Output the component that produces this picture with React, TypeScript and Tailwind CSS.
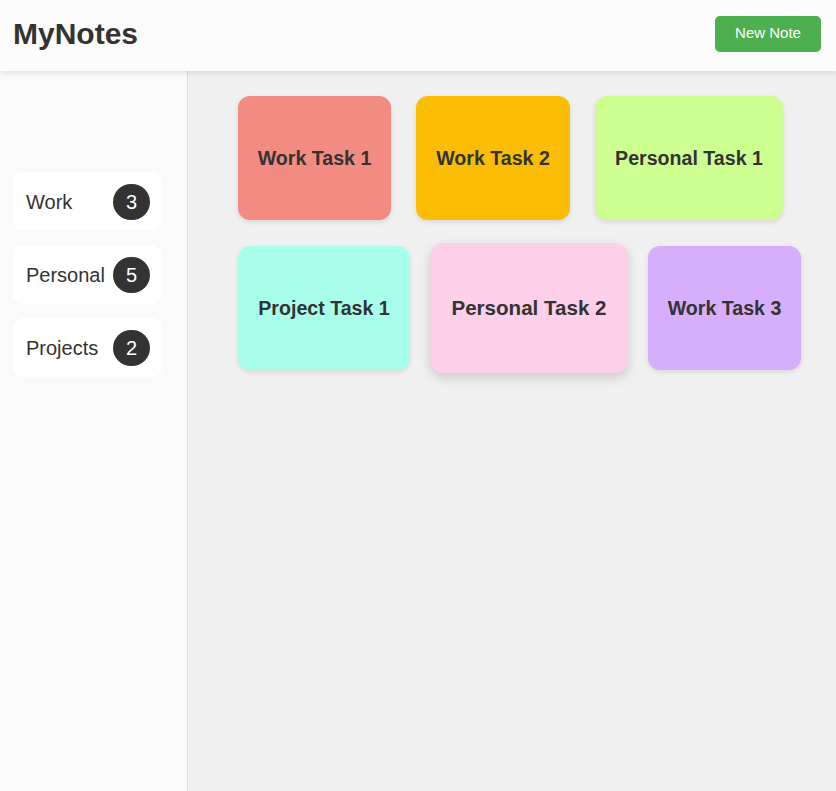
import React from "react";

const notes = [
  { title: "Work Task 1", bg: "bg-[#f28b82]", w: "w-[153px]", hover: false },
  { title: "Work Task 2", bg: "bg-[#fbbc04]", w: "w-[154px]", hover: false },
  { title: "Personal Task 1", bg: "bg-[#ccff90]", w: "w-[188px]", hover: false },
  { title: "Project Task 1", bg: "bg-[#a7ffeb]", w: "w-[172px]", hover: false },
  { title: "Personal Task 2", bg: "bg-[#fdcfe8]", w: "w-[188px]", hover: true },
  { title: "Work Task 3", bg: "bg-[#d7aefb]", w: "w-[153px]", hover: false },
];

const cats = [
  { name: "Work", count: 3 },
  { name: "Personal", count: 5 },
  { name: "Projects", count: 2 },
];

export default function App() {
  return (
    <div
      className="flex h-[791px] w-[836px] flex-col overflow-hidden bg-[#f0f0f0] text-[#333]"
      style={{ fontFamily: '"Liberation Sans", Arial, sans-serif' }}
    >
      <header className="relative z-10 flex h-[71px] shrink-0 items-center justify-between bg-[#fcfcfc] pb-[4px] pl-[13px] pr-[15px] shadow-[0_2px_5px_rgba(0,0,0,0.1)]">
        <h1 className="m-0 text-[30px] font-bold leading-none text-[#333]">MyNotes</h1>
        <button className="h-[36px] w-[106px] rounded-[5px] bg-[#4caf50] text-[15px] text-white">
          New Note
        </button>
      </header>
      <div className="flex min-h-0 flex-1">
        <aside className="flex w-[188px] shrink-0 flex-col gap-[14px] border-r border-[#dddddd] bg-[#fafafa] pl-[13px] pt-[101px]">
          {cats.map((c) => (
            <div
              key={c.name}
              className="flex h-[59px] w-[149px] items-center justify-between rounded-[10px] bg-white pl-[13px] pr-[12px]"
            >
              <span className="text-[20px]">{c.name}</span>
              <span className="flex h-[36px] w-[37px] items-center justify-center rounded-full bg-[#333] text-[20px] text-white">
                {c.count}
              </span>
            </div>
          ))}
        </aside>
        <main className="flex-1 pl-[50px] pr-[25px] pt-[25px]">
          <div className="flex flex-wrap content-start gap-[25px] gap-y-[26px]">
            {notes.map((n) => (
              <div
                key={n.title}
                className={`flex h-[124px] items-center justify-center rounded-[12px] pt-[2px] ${n.w} ${n.bg} ${
                  n.hover
                    ? "scale-[1.05] shadow-[0_4px_10px_rgba(0,0,0,0.15)]"
                    : "shadow-[0_2px_5px_rgba(0,0,0,0.1)]"
                }`}
              >
                <span className="whitespace-nowrap text-[19.6px] font-bold text-[#333]">{n.title}</span>
              </div>
            ))}
          </div>
        </main>
      </div>
    </div>
  );
}
